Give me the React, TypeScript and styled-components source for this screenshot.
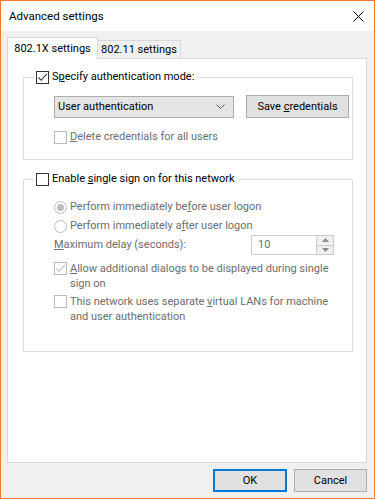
import React from "react";
import styled, { createGlobalStyle } from "styled-components";

const GlobalStyle = createGlobalStyle`
  * { box-sizing: border-box; }
  body {
    margin: 0;
    font-family: Roboto, "Liberation Sans", sans-serif;
    font-size: 11px;
    color: #000;
  }
`;

const Window = styled.div`
  width: 375px;
  height: 499px;
  border: 1px solid #f0782d;
  background: #f0f0f0;
  display: flex;
  flex-direction: column;
`;

const TitleBar = styled.div`
  height: 30px;
  background: #fff;
  display: flex;
  align-items: center;
  justify-content: space-between;
  padding: 0 10px 0 8px;
  font-size: 11.5px;
`;

const Body = styled.div`
  flex: 1;
  display: flex;
  flex-direction: column;
  padding: 6px 7px 0 6px;
`;

const TabStrip = styled.div`
  display: flex;
  align-items: flex-end;
  height: 22px;
  position: relative;
  z-index: 1;
  margin-bottom: -1px;
`;

const Tab = styled.div<{ $active?: boolean }>`
  width: ${(p) => (p.$active ? "91px" : "83px")};
  height: ${(p) => (p.$active ? "22px" : "19px")};
  padding-top: ${(p) => (p.$active ? "3px" : "1px")};
  text-align: center;
  background: ${(p) => (p.$active ? "#fff" : "#f0f0f0")};
  border: 1px solid #d9d9d9;
  border-bottom: ${(p) => (p.$active ? "none" : "1px solid #d9d9d9")};
  border-left: ${(p) => (p.$active ? "1px solid #d9d9d9" : "none")};
  line-height: 16px;
  white-space: nowrap;
`;

const Panel = styled.div`
  height: 405px;
  background: #fff;
  border: 1px solid #d9d9d9;
  padding: 10px 13px 0 15px;
  display: flex;
  flex-direction: column;
  gap: 11px;
`;

const Group = styled.fieldset<{ $height: number }>`
  margin: 0;
  padding: 0 0 0 10px;
  border: 1px solid #dcdcdc;
  height: ${(p) => p.$height}px;
  min-width: 0;
`;

const Legend = styled.legend`
  padding: 0 3px 0 2px;
  display: flex;
  align-items: center;
  gap: 3px;
  line-height: 16px;
`;

const GroupContent = styled.div<{ $top: number }>`
  padding: ${(p) => p.$top}px 0 0 20px;
  display: flex;
  flex-direction: column;
`;

const Row = styled.div<{ $gap?: number; $mt?: number }>`
  display: flex;
  align-items: center;
  gap: ${(p) => p.$gap ?? 3}px;
  margin-top: ${(p) => p.$mt ?? 0}px;
`;

const TopRow = styled(Row)`
  align-items: flex-start;
`;

const Label = styled.span<{ $disabled?: boolean }>`
  color: ${(p) => (p.$disabled ? "#6d6d6d" : "#000")};
  line-height: 16px;
  white-space: nowrap;
`;

const WrapLabel = styled(Label)`
  display: flex;
  flex-direction: column;
  line-height: 15px;
  margin-top: -1px;
`;

const LabelLine = styled.span`
  display: block;
`;

const Box = styled.span<{ $disabled?: boolean }>`
  width: 13px;
  height: 13px;
  flex: none;
  border: 1px solid ${(p) => (p.$disabled ? "#bcbcbc" : "#333")};
  background: #fff;
  display: flex;
  align-items: center;
  justify-content: center;
`;

const RadioCircle = styled.span`
  width: 13px;
  height: 13px;
  flex: none;
  border: 1px solid #bcbcbc;
  border-radius: 50%;
  background: #fff;
  display: flex;
  align-items: center;
  justify-content: center;
`;

const RadioDot = styled.span`
  width: 7px;
  height: 7px;
  border-radius: 50%;
  background: #bcbcbc;
`;

const Select = styled.div`
  width: 180px;
  height: 22px;
  background: #e5e5e5;
  border: 1px solid #adadad;
  display: flex;
  align-items: center;
  justify-content: space-between;
  padding: 0 8px 0 3px;
`;

const Button = styled.div<{ $default?: boolean; $width: number }>`
  width: ${(p) => p.$width}px;
  height: 23px;
  background: #e1e1e1;
  border: ${(p) => (p.$default ? "2px solid #0078d7" : "1px solid #adadad")};
  display: flex;
  align-items: center;
  justify-content: center;
  line-height: 16px;
`;

const DelayRow = styled(Row)`
  justify-content: space-between;
  width: 280px;
  margin-top: 1px;
`;

const Spin = styled.div`
  width: 83px;
  height: 20px;
  border: 1px solid #cccccc;
  background: #fff;
  display: flex;
  align-items: stretch;
`;

const SpinValue = styled.span`
  flex: 1;
  color: #6d6d6d;
  padding-left: 6px;
  line-height: 18px;
`;

const SpinButtons = styled.div`
  width: 17px;
  display: flex;
  flex-direction: column;
`;

const SpinButton = styled.div<{ $up?: boolean }>`
  flex: 1;
  background: #f0f0f0;
  border-left: 1px solid #cccccc;
  border-top: ${(p) => (p.$up ? "none" : "1px solid #cccccc")};
  display: flex;
  align-items: center;
  justify-content: center;
`;

const Footer = styled.div`
  display: flex;
  justify-content: flex-end;
  gap: 7px;
  padding-top: 6px;
`;

const Check = ({ color }: { color: string }) => (
  <svg width="11" height="11" viewBox="0 0 11 11">
    <path d="M1.5 5.5 L4.2 8.3 L9.8 1.8" fill="none" stroke={color} strokeWidth="1.1" />
  </svg>
);

function Checkbox({ checked, disabled }: { checked?: boolean; disabled?: boolean }) {
  return (
    <Box $disabled={disabled}>
      {checked && <Check color={disabled ? "#bcbcbc" : "#333"} />}
    </Box>
  );
}

function Radio({ selected }: { selected?: boolean }) {
  return <RadioCircle>{selected && <RadioDot />}</RadioCircle>;
}

export default function App() {
  return (
    <>
      <GlobalStyle />
      <Window>
        <TitleBar>
          <span>Advanced settings</span>
          <svg width="11" height="11" viewBox="0 0 11 11">
            <path d="M0.5 0.5 L10.5 10.5 M10.5 0.5 L0.5 10.5" stroke="#000" strokeWidth="1" />
          </svg>
        </TitleBar>
        <Body>
          <TabStrip>
            <Tab $active>802.1X settings</Tab>
            <Tab>802.11 settings</Tab>
          </TabStrip>
          <Panel>
            <Group $height={91}>
              <Legend>
                <Checkbox checked />
                <Label>
                  S<u>p</u>ecify authentication mode:
                </Label>
              </Legend>
              <GroupContent $top={10}>
                <Row $gap={12}>
                  <Select>
                    <span>User authentication</span>
                    <svg width="9" height="5" viewBox="0 0 9 5">
                      <path d="M0.5 0.5 L4.5 4.5 L8.5 0.5" fill="none" stroke="#555" strokeWidth="1" />
                    </svg>
                  </Select>
                  <Button $width={103}>
                    <span>
                      Save <u>c</u>redentials
                    </span>
                  </Button>
                </Row>
                <Row $mt={11}>
                  <Checkbox disabled />
                  <Label $disabled>
                    <u>D</u>elete credentials for all users
                  </Label>
                </Row>
              </GroupContent>
            </Group>
            <Group $height={181}>
              <Legend>
                <Checkbox />
                <Label>
                  Enable <u>s</u>ingle sign on for this network
                </Label>
              </Legend>
              <GroupContent $top={12}>
                <Row>
                  <Radio selected />
                  <Label $disabled>
                    Perform immediately be<u>f</u>ore user logon
                  </Label>
                </Row>
                <Row $mt={3}>
                  <Radio />
                  <Label $disabled>
                    Perform immediately a<u>f</u>ter user logon
                  </Label>
                </Row>
                <DelayRow>
                  <Label $disabled>
                    <u>M</u>aximum delay (seconds):
                  </Label>
                  <Spin>
                    <SpinValue>10</SpinValue>
                    <SpinButtons>
                      <SpinButton $up>
                        <svg width="7" height="4" viewBox="0 0 7 4">
                          <path d="M0 4 L3.5 0 L7 4 Z" fill="#8a8a8a" />
                        </svg>
                      </SpinButton>
                      <SpinButton>
                        <svg width="7" height="4" viewBox="0 0 7 4">
                          <path d="M0 0 L3.5 4 L7 0 Z" fill="#8a8a8a" />
                        </svg>
                      </SpinButton>
                    </SpinButtons>
                  </Spin>
                </DelayRow>
                <TopRow $mt={7}>
                  <Checkbox checked disabled />
                  <WrapLabel $disabled>
                    <LabelLine>
                      <u>A</u>llow additional dialogs to be displayed during single
                    </LabelLine>
                    <LabelLine>sign on</LabelLine>
                  </WrapLabel>
                </TopRow>
                <TopRow $mt={4}>
                  <Checkbox disabled />
                  <WrapLabel $disabled>
                    <LabelLine>
                      This network uses separate <u>v</u>irtual LANs for machine
                    </LabelLine>
                    <LabelLine>and user authentication</LabelLine>
                  </WrapLabel>
                </TopRow>
              </GroupContent>
            </Group>
          </Panel>
          <Footer>
            <Button $default $width={74}>OK</Button>
            <Button $width={73}>Cancel</Button>
          </Footer>
        </Body>
      </Window>
    </>
  );
}
